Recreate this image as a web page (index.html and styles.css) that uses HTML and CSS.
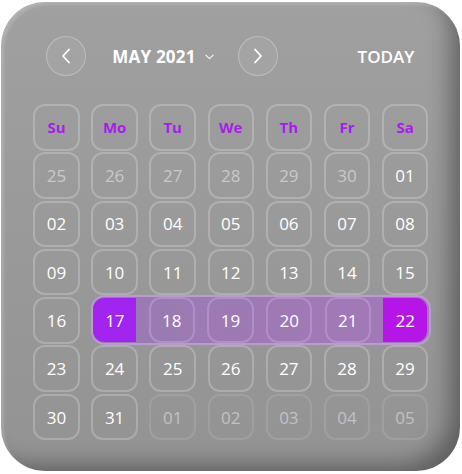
FILE: index.html
```html
<!DOCTYPE html>
<html>
<head>
<meta charset="utf-8">
<link rel="stylesheet" href="styles.css">
</head>
<body>
<div class="card">
  <div class="header">
    <button class="nav"><svg width="10" height="16" viewBox="0 0 10 16"><path d="M8 1.5 L2 8 L8 14.5" fill="none" stroke="#fff" stroke-width="1.8" stroke-linecap="round" stroke-linejoin="round"/></svg></button>
    <div class="month">MAY 2021 <svg class="caret" width="9" height="6" viewBox="0 0 9 6"><path d="M1 1.2 L4.5 4.6 L8 1.2" fill="none" stroke="#eee" stroke-width="1.3" stroke-linecap="round" stroke-linejoin="round"/></svg></div>
    <button class="nav fwd"><svg width="10" height="16" viewBox="0 0 10 16"><path d="M2 1.5 L8 8 L2 14.5" fill="none" stroke="#fff" stroke-width="1.8" stroke-linecap="round" stroke-linejoin="round"/></svg></button>
    <div class="today">TODAY</div>
  </div>
  <div class="grid">
    <div class="cell wd">Su</div><div class="cell wd">Mo</div><div class="cell wd">Tu</div><div class="cell wd">We</div><div class="cell wd">Th</div><div class="cell wd">Fr</div><div class="cell wd">Sa</div>

    <div class="cell dim">25</div><div class="cell dim">26</div><div class="cell dim">27</div><div class="cell dim">28</div><div class="cell dim">29</div><div class="cell dim">30</div><div class="cell">01</div>

    <div class="cell">02</div><div class="cell">03</div><div class="cell">04</div><div class="cell">05</div><div class="cell">06</div><div class="cell">07</div><div class="cell">08</div>

    <div class="cell">09</div><div class="cell">10</div><div class="cell">11</div><div class="cell">12</div><div class="cell">13</div><div class="cell">14</div><div class="cell">15</div>

    <div class="cell">16</div>
    <div class="range">
      <div class="sel start">17</div>
      <div class="rcell">18</div>
      <div class="rcell">19</div>
      <div class="rcell">20</div>
      <div class="rcell">21</div>
      <div class="sel end">22</div>
    </div>

    <div class="cell">23</div><div class="cell">24</div><div class="cell">25</div><div class="cell">26</div><div class="cell">27</div><div class="cell">28</div><div class="cell">29</div>

    <div class="cell">30</div><div class="cell">31</div><div class="cell nextm">01</div><div class="cell nextm">02</div><div class="cell nextm">03</div><div class="cell nextm">04</div><div class="cell nextm">05</div>
  </div>
</div>
</body>
</html>
```

FILE: styles.css
```css
* { box-sizing: border-box; }
html, body { margin: 0; padding: 0; background: #fff; }
body {
  font-family: "Open Sans", "Liberation Sans", sans-serif;
  width: 462px;
  height: 474px;
  overflow: hidden;
}
.card {
  margin: 2px 2px 3px 1px;
  width: 459px;
  height: 469px;
  border-radius: 44px;
  background: linear-gradient(180deg, #a0a0a0 0%, #989898 60%, #939393 100%);
  box-shadow: inset -18px -14px 22px -8px rgba(0,0,0,0.36), inset 3px 3px 3px rgba(255,255,255,0.18);
  padding: 34px 0 0 32.3px;
}
.header {
  display: flex;
  align-items: center;
  height: 40px;
  width: 395px;
  padding: 0 14px 0 13px;
}
.nav {
  width: 40px;
  height: 40px;
  border-radius: 50%;
  border: 1px solid rgba(255,255,255,0.28);
  background: rgba(255,255,255,0.06);
  display: flex;
  align-items: center;
  justify-content: center;
  padding: 0;
}
.month {
  margin-left: 26px;
  display: flex;
  align-items: center;
  gap: 9px;
  color: #fff;
  font-weight: 700;
  font-size: 17px;
  letter-spacing: 0.2px;
}
.caret { margin-top: 1px; }
.fwd { margin-left: 24px; }
.today {
  margin-left: auto;
  color: #fff;
  font-weight: 600;
  font-size: 17px;
}
.grid {
  margin-top: 28px;
  width: 395px;
  display: grid;
  grid-template-columns: repeat(7, 1fr);
  grid-auto-rows: 46.5px;
  column-gap: 11.6px;
  row-gap: 1.8px;
}
.cell {
  border: 2px solid rgba(255,255,255,0.22);
  border-radius: 12px;
  display: flex;
  align-items: center;
  justify-content: center;
  color: #fff;
  font-size: 17px;
}
.wd {
  color: #a91ce9;
  font-weight: 700;
  font-size: 15px;
}
.dim { color: #c9c9c9; }
.nextm { color: #c2c2c2; border-color: rgba(255,255,255,0.11); }
.range {
  grid-column: 2 / span 6;
  margin: -2px -3px -1px 0;
  border: 2px solid rgba(225,195,245,0.45);
  border-radius: 14px;
  background: linear-gradient(90deg, #997bb1 0%, #9e79b4 50%, #a479b8 100%);
  display: grid;
  grid-template-columns: 43px repeat(4, 46.5px) 44px;
  justify-content: space-between;
  align-items: center;
  padding: 0 2px 0 0;
}
.sel {
  height: 44px;
  display: flex;
  align-items: center;
  justify-content: center;
  color: #fff;
  font-size: 17px;
}
.start { background: #a224ef; border-radius: 11px 0 0 11px; }
.end { background: #b516e7; border-radius: 0 11px 11px 0; }
.rcell {
  height: 46px;
  border: 2px solid rgba(225,200,245,0.28);
  border-radius: 12px;
  display: flex;
  align-items: center;
  justify-content: center;
  color: #fff;
  font-size: 17px;
}
```
